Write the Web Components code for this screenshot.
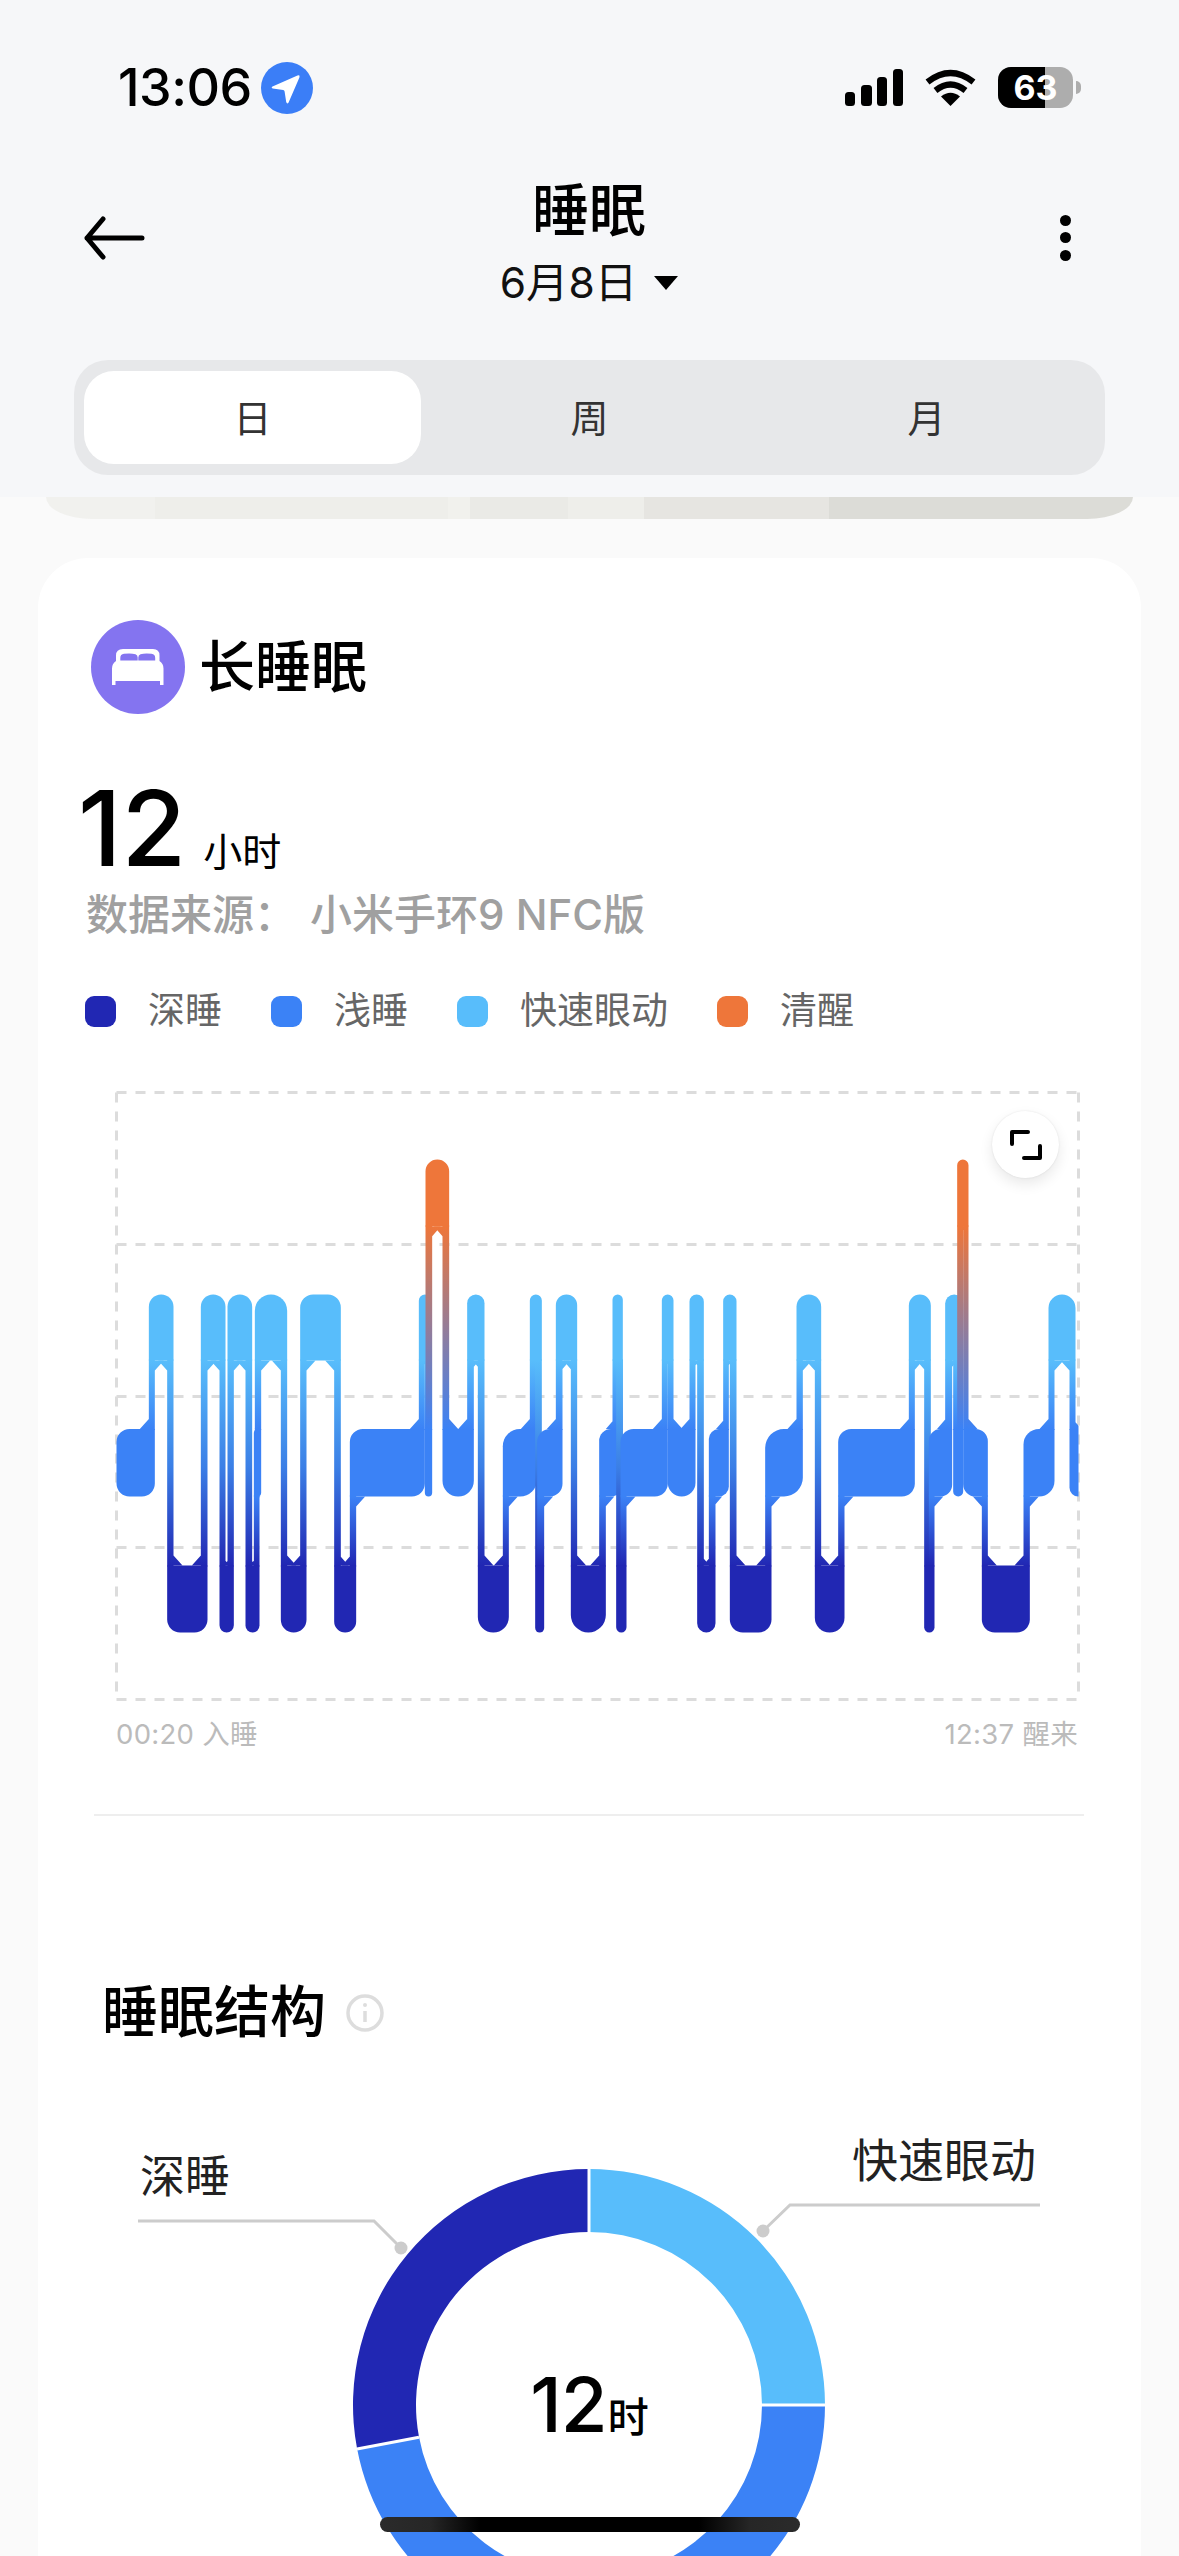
<!DOCTYPE html>
<html lang="zh">
<head>
<meta charset="utf-8">
<title>睡眠</title>
<style>
  html, body { margin: 0; padding: 0; background: #fafafa; }
  body {
    width: 1179px;
    height: 2556px;
    overflow: hidden;
    position: relative;
    font-family: Inter, "Noto Sans CJK SC", sans-serif;
  }
</style>
</head>
<body>
<sleep-header></sleep-header>
<hero-peek></hero-peek>
<sleep-card>
  <card-title>长睡眠</card-title>
  <sleep-summary></sleep-summary>
  <sleep-legend></sleep-legend>
  <sleep-chart></sleep-chart>
  <sleep-structure></sleep-structure>
</sleep-card>
<home-bar></home-bar>

<script>
(function() {
    'use strict';

const FONT = `Inter, "Noto Sans CJK SC", sans-serif`;
const KLEUR = { awake: '#ee763a', rem: '#58bdfb', light: '#3b82f6', deep: '#2127b3' };

class StatusBar extends HTMLElement {
    constructor() {
        super();
        this.attachShadow({ mode: 'open' }).innerHTML = `
      <style>
        :host { display: flex; align-items: center; justify-content: space-between; height: 51px; padding: 62px 98px 0 118px; font-family: ${FONT}; }
        .links { display: flex; align-items: center; gap: 9px; }
        .tijd { font-size: 52px; font-weight: 500; line-height: 51px; color: #000; letter-spacing: -0.5px; }
        .rechts { display: flex; align-items: center; gap: 22px; }
        .batterij { display: flex; align-items: center; gap: 3px; }
        .cel { position: relative; width: 75px; height: 41px; border-radius: 13px; overflow: hidden; background: #adadad; display: flex; align-items: center; justify-content: center; }
        .cel::before { content: ''; position: absolute; left: 0; top: 0; bottom: 0; width: 47px; background: #000; }
        .cel span { position: relative; color: #fff; font-size: 34px; font-weight: 700; line-height: 41px; }
        .nub { width: 5px; height: 13px; background: #adadad; border-radius: 0 6px 6px 0; }
        svg { display: block; }
      </style>
      <div class="links">
        <span class="tijd">13:06</span>
        <svg width="52" height="52" viewBox="0 0 52 52">
          <circle cx="26" cy="26" r="26" fill="#3b7ef7"/>
          <path d="M11.5 24.6 L36.5 13.6 Q39.3 12.6 38.4 15.4 L27.6 40.4 Q26.2 42.6 25.2 40 L23.6 29.4 Q23.4 28.2 22.2 28 L11.7 26.6 Q9.8 25.8 11.5 24.6 Z" fill="#fff"/>
        </svg>
      </div>
      <div class="rechts">
        <svg width="58" height="37" viewBox="0 0 58 37" fill="#000">
          <rect x="0" y="23" width="10" height="14" rx="3.5"/>
          <rect x="16" y="16" width="11" height="21" rx="3.5"/>
          <rect x="32" y="8" width="10" height="29" rx="3.5"/>
          <rect x="48" y="0" width="10" height="37" rx="3.5"/>
        </svg>
        <svg width="51" height="37" viewBox="0 0 51 37">
          <path d="M25.5 37 L16 27.5 Q25.5 20 35 27.5 Z" fill="#000"/>
          <path d="M10.5 21.5 Q25.5 9.5 40.5 21.5" fill="none" stroke="#000" stroke-width="6.2"/>
          <path d="M2.5 13 Q25.5 -5 48.5 13" fill="none" stroke="#000" stroke-width="6.2"/>
        </svg>
        <div class="batterij">
          <div class="cel"><span>63</span></div>
          <div class="nub"></div>
        </div>
      </div>
    `;
    }
}
customElements.define('status-bar', StatusBar);

class NavBar extends HTMLElement {
    constructor() {
        super();
        this.attachShadow({ mode: 'open' }).innerHTML = `
      <style>
        :host { display: grid; grid-template-columns: 1fr auto 1fr; align-items: center; padding: 68px 84px 0 83px; font-family: ${FONT}; color: #000; }
        .midden { display: flex; flex-direction: column; align-items: center; }
        .titel { font-size: 57px; font-weight: 500; line-height: 60px; }
        .datum { display: flex; align-items: center; gap: 17px; font-size: 42.5px; line-height: 54px; margin-top: 15px; color: #111; }
        .datum i { width: 0; height: 0; border-left: 12px solid transparent; border-right: 12px solid transparent; border-top: 14px solid #000; }
        .meer { justify-self: end; margin: 0 24px 16px 0; display: flex; flex-direction: column; gap: 6.5px; }
        .meer b { display: block; width: 11px; height: 11px; border-radius: 50%; background: #000; }
        svg { display: block; margin-bottom: 16px; }
      </style>
      <svg width="62" height="44" viewBox="0 0 62 44" fill="none" stroke="#000" stroke-width="5" stroke-linecap="round" stroke-linejoin="round">
        <path d="M59 22 H4 M20 3 L4 22 L20 41"/>
      </svg>
      <div class="midden">
        <div class="titel">睡眠</div>
        <div class="datum"><span>6月8日</span><i></i></div>
      </div>
      <div class="meer"><b></b><b></b><b></b></div>
    `;
    }
}
customElements.define('nav-bar', NavBar);

class PeriodTabs extends HTMLElement {
    constructor() {
        super();
        this.attachShadow({ mode: 'open' }).innerHTML = `
      <style>
        :host { display: grid; grid-template-columns: repeat(3, 1fr); margin: 0 74px; padding: 11px 10px; height: 93px; background: #e7e8ea; border-radius: 34px; font-family: ${FONT}; }
        .tab { display: flex; align-items: center; justify-content: center; padding-bottom: 5px; font-size: 38px; color: #333; border-radius: 30px; }
        .actief { background: #fff; }
      </style>
      <div class="tab actief">日</div>
      <div class="tab">周</div>
      <div class="tab">月</div>
    `;
    }
}
customElements.define('period-tabs', PeriodTabs);

class SleepHeader extends HTMLElement {
    constructor() {
        super();
        this.attachShadow({ mode: 'open' }).innerHTML = `
      <style>
        :host { display: block; height: 497px; background: #f6f7f9; overflow: hidden; }
        period-tabs { margin-top: 50px; }
      </style>
      <status-bar></status-bar>
      <nav-bar></nav-bar>
      <period-tabs></period-tabs>
    `;
    }
}
customElements.define('sleep-header', SleepHeader);

class HeroPeek extends HTMLElement {
    constructor() {
        super();
        this.attachShadow({ mode: 'open' }).innerHTML = `
      <style>
        :host { display: block; height: 22px; margin: 0 46px; border-radius: 0 0 46px 46px / 0 0 22px 22px;
          background: linear-gradient(90deg, #f1f1ee 0 10%, #eeeeea 10% 37%, #f1f1ed 37% 39%, #eaeae6 39% 48%, #eeeeea 48% 55%, #e6e5e1 55% 72%, #dcdcd7 72% 100%); }
      </style>
    `;
    }
}
customElements.define('hero-peek', HeroPeek);

class SleepCard extends HTMLElement {
    constructor() {
        super();
        this.attachShadow({ mode: 'open' }).innerHTML = `
      <style>
        :host { display: block; margin: 39px 38px 0; padding-top: 62px; height: 1938px; background: #fff; border-radius: 50px 50px 0 0; font-family: ${FONT}; color: #000; overflow: hidden; }
      </style>
      <slot></slot>
    `;
    }
}
customElements.define('sleep-card', SleepCard);

class CardTitle extends HTMLElement {
    constructor() {
        super();
        this.attachShadow({ mode: 'open' }).innerHTML = `
      <style>
        :host { display: flex; align-items: center; gap: 14px; padding-left: 53px; font-family: ${FONT}; }
        .rond { width: 94px; height: 94px; border-radius: 50%; background: #8474f0; display: flex; align-items: center; justify-content: center; }
        .tekst { font-size: 56px; font-weight: 500; line-height: 60px; color: #000; }
        svg { display: block; }
      </style>
      <div class="rond">
        <svg width="52" height="36" viewBox="0 0 52 36">
          <path fill="#fff" d="M11 0 H41 Q47.5 0 47.5 6.5 V12 Q51.5 14.5 51.5 19.5 V36 H48 V32 H3.5 V36 H0 V19.5 Q0 14.5 4 12 V6.5 Q4 0 11 0 Z"/>
          <path fill="#8474f0" d="M8.3 11.5 V9 Q8.3 5.3 12 4.8 Q19 3.8 23.5 5.3 Q25.7 6.2 25.7 8.5 V11.5 Z M26.3 11.5 V8.5 Q26.3 6.2 28.5 5.3 Q33 3.8 39.5 4.8 Q43.2 5.3 43.2 9 V11.5 Z"/>
        </svg>
      </div>
      <span class="tekst"><slot></slot></span>
    `;
    }
}
customElements.define('card-title', CardTitle);

class SleepSummary extends HTMLElement {
    constructor() {
        super();
        this.attachShadow({ mode: 'open' }).innerHTML = `
      <style>
        :host { display: block; padding: 66px 0 0 40px; font-family: ${FONT}; }
        .duur { display: flex; align-items: baseline; gap: 17px; line-height: 96px; height: 96px; }
        .getal { font-size: 105px; font-weight: 500; color: #000; }
        .eenheid { font-size: 39px; color: #000; }
        .bron { display: flex; gap: 14px; margin: 11px 0 0 8px; font-size: 42px; font-weight: 500; line-height: 56px; color: #a0a0a0; white-space: nowrap; }
      </style>
      <div class="duur"><span class="getal">12</span><span class="eenheid">小时</span></div>
      <div class="bron"><span>数据来源：</span><span>小米手环9 NFC版</span></div>
    `;
    }
}
customElements.define('sleep-summary', SleepSummary);

class SleepLegend extends HTMLElement {
    constructor() {
        super();
        const items = [['深睡', KLEUR.deep], ['浅睡', KLEUR.light], ['快速眼动', KLEUR.rem], ['清醒', KLEUR.awake]];
        this.attachShadow({ mode: 'open' }).innerHTML = `
      <style>
        :host { display: flex; gap: 49px; padding: 48px 0 0 47px; font-family: ${FONT}; }
        .item { display: flex; align-items: center; gap: 32px; font-size: 37px; line-height: 40px; color: #666; }
        i { width: 31px; height: 31px; border-radius: 9px; }
      </style>
      ${items.map(([label, kleur]) => `<div class="item"><i style="background:${kleur}"></i><span>${label}</span></div>`).join('')}
    `;
    }
}
customElements.define('sleep-legend', SleepLegend);

// slaapgrafiek: x in kroppen-eenheden, x = 78..2964 -> px = X / 3 (links van de svg)
const SEGMENTEN = [
    ['light', 78, 193], ['rem', 175, 249], ['deep', 230, 351], ['rem', 331, 405], ['deep', 387, 430],
    ['rem', 411, 485], ['deep', 465, 507], ['light', 490, 512], ['rem', 493, 590], ['deep', 571, 648],
    ['rem', 629, 751], ['deep', 731, 797], ['light', 778, 1003], ['rem', 985, 1022], ['light', 1003, 1025],
    ['awake', 1005, 1076], ['light', 1056, 1150], ['rem', 1130, 1182], ['deep', 1162, 1255], ['light', 1237, 1340],
    ['rem', 1318, 1354], ['deep', 1334, 1361], ['light', 1340, 1416], ['rem', 1396, 1460], ['deep', 1441, 1546],
    ['light', 1526, 1597], ['rem', 1566, 1597], ['deep', 1577, 1608], ['light', 1590, 1732], ['rem', 1714, 1749],
    ['light', 1732, 1815], ['rem', 1797, 1840], ['deep', 1820, 1875], ['light', 1855, 1915], ['rem', 1898, 1938],
    ['deep', 1918, 2043], ['light', 2024, 2137], ['rem', 2118, 2192], ['deep', 2173, 2262], ['light', 2243, 2473],
    ['rem', 2455, 2521], ['deep', 2501, 2532], ['light', 2515, 2585], ['rem', 2564, 2618], ['light', 2588, 2618],
    ['awake', 2600, 2634], ['light', 2618, 2692], ['deep', 2674, 2818], ['light', 2799, 2892], ['rem', 2874, 2955],
    ['light', 2937, 2990]
];
// y relatief aan de bovenkant van de grafiek (1092)
const NIVEAU = {
    awake: { top: 67, bottom: 134, rang: 0 },
    rem: { top: 202, bottom: 268, rang: 1 },
    light: { top: 336.5, bottom: 404, rang: 2 },
    deep: { top: 473, bottom: 540, rang: 3 }
};

function blokPad(x0, x1, top, bottom, rTL, rTR, rBR, rBL) {
    const boog = (r, x, y) => r ? `A${r} ${r} 0 0 1 ${x} ${y}` : `L${x} ${y}`;
    return `M${x0 + rTL} ${top} H${x1 - rTR} ${boog(rTR, x1, top + rTR)} V${bottom - rBR} ${boog(rBR, x1 - rBR, bottom)} H${x0 + rBL} ${boog(rBL, x0, bottom - rBL)} V${top + rTL} ${boog(rTL, x0 + rTL, top)} Z`;
}

function bouwGrafiek() {
    const segs = SEGMENTEN.map(([niveau, a, b]) => ({ niveau, x0: a / 3 - 26, x1: b / 3 - 26 }));
    const defs = [];
    let vorm = '';
    const vloeiing = new Map();

    const verloop = (boven, onder) => {
        const id = `v-${boven}-${onder}`;
        if (!vloeiing.has(id)) {
            const stops = [`<stop offset="0" stop-color="${KLEUR[boven]}"/>`];
            if (boven === 'rem' && onder === 'deep') stops.push(`<stop offset="0.52" stop-color="#3b7fe6"/>`);
            stops.push(`<stop offset="1" stop-color="${KLEUR[onder]}"/>`);
            defs.push(`<linearGradient id="${id}" gradientUnits="userSpaceOnUse" x1="0" x2="0" y1="${NIVEAU[boven].bottom}" y2="${NIVEAU[onder].top}">${stops.join('')}</linearGradient>`);
            vloeiing.set(id, true);
        }
        return id;
    };

    segs.forEach((seg, i) => {
        const vorige = segs[i - 1];
        const volgende = segs[i + 1];
        const n = NIVEAU[seg.niveau];
        const w = seg.x1 - seg.x0;
        // smalle blokken krijgen een volle koepel, brede alleen een afgeronde hoek
        const r = w <= 38 ? w / 2 : 13;
        const hoek = (buur, kant) => {
            // hoek is recht als de buur aan die kant zit en in die richting ligt
            if (!buur) return r;
            const buurBoven = NIVEAU[buur.niveau].rang < n.rang;
            return kant === buurBoven ? 0 : r;
        };
        const rTL = hoek(vorige, true);
        const rBL = hoek(vorige, false);
        const rTR = hoek(volgende, true);
        const rBR = hoek(volgende, false);

        // verbinding met het volgende blok
        if (volgende) {
            const cx0 = Math.max(seg.x0, volgende.x0);
            const cx1 = Math.min(seg.x1, volgende.x1);
            const naarBeneden = NIVEAU[volgende.niveau].rang > n.rang;
            const boven = naarBeneden ? seg : volgende;
            const onder = naarBeneden ? volgende : seg;
            const id = verloop(boven.niveau, onder.niveau);
            const yB = NIVEAU[boven.niveau].bottom;
            const yO = NIVEAU[onder.niveau].top;
            let d = `M${cx0} ${yB - 1} H${cx1} V${yO + 1} H${cx0} Z`;
            // kleine schuine overgang naast de verbinding
            const schuin = (blok, y, richting) => {
                const isLinks = Math.abs(blok.x0 - cx0) < 0.5;
                const rand = isLinks ? cx1 : cx0;
                const ruimte = isLinks ? blok.x1 - cx1 : cx0 - blok.x0;
                const andereKant = blok === seg ? vorige : volgende;
                const breed = Math.max(0, Math.min(9, andereKant ? ruimte / 2 : ruimte));
                if (breed <= 0) return '';
                const s = isLinks ? 1 : -1;
                const h = Math.min(10, breed * 1.15);
                return `M${rand} ${y} H${rand + s * breed} L${rand} ${y + richting * h} Z`;
            };
            d += schuin(boven, yB, 1) + schuin(onder, yO, -1);
            vorm += `<path fill="url(#${id})" d="${d}"/>`;
        }
        vorm += `<path fill="${KLEUR[seg.niveau]}" d="${blokPad(seg.x0, seg.x1, n.top, n.bottom, rTL, rTR, rBR, rBL)}"/>`;
    });

    const lijnen = [0, 152, 304, 455, 607].map(y => `<path d="M0 ${y} H962"/>`).join('')
        + `<path d="M0 0 V607"/><path d="M962 0 V607"/>`;

    return `
      <svg width="966" height="612" viewBox="-1.5 -1.5 966 612">
        <defs>
          ${defs.join('')}
          <clipPath id="rand"><rect x="-2" y="-2" width="964" height="620"/></clipPath>
        </defs>
        <g fill="none" stroke="#dcdcdc" stroke-width="3" stroke-dasharray="10 9">${lijnen}</g>
        <g clip-path="url(#rand)">${vorm}</g>
      </svg>`;
}

class SleepChart extends HTMLElement {
    constructor() {
        super();
        this.attachShadow({ mode: 'open' }).innerHTML = `
      <style>
        :host { display: block; position: relative; width: 966px; margin: 60px 0 0 77px; font-family: ${FONT}; }
        svg { display: block; }
        .as { display: flex; justify-content: space-between; width: 962px; margin: 15px 0 0 1px; font-size: 27.5px; line-height: 32px; color: #bbb; }
        .as span { letter-spacing: 0.3px; }
        .groot { position: absolute; left: 877px; top: 20px; width: 67px; height: 67px; border-radius: 50%; background: #fff; box-shadow: 0 6px 14px rgba(0,0,0,0.09), 0 0 2px rgba(0,0,0,0.1); display: flex; align-items: center; justify-content: center; }
      </style>
      ${bouwGrafiek()}
      <div class="as"><span>00:20 入睡</span><span>12:37 醒来</span></div>
      <div class="groot">
        <svg width="32" height="30" viewBox="0 0 32 30" fill="none" stroke="#000" stroke-width="4" stroke-linecap="round" stroke-linejoin="round">
          <path d="M2 14 V2 H18 M30 16 V28 H14"/>
        </svg>
      </div>
    `;
    }
}
customElements.define('sleep-chart', SleepChart);

function boog(cx, cy, R, r, van, tot) {
    const p = (straal, hoek) => {
        const a = (hoek - 90) * Math.PI / 180;
        return `${(cx + straal * Math.cos(a)).toFixed(2)} ${(cy + straal * Math.sin(a)).toFixed(2)}`;
    };
    const groot = tot - van > 180 ? 1 : 0;
    return `M${p(R, van)} A${R} ${R} 0 ${groot} 1 ${p(R, tot)} L${p(r, tot)} A${r} ${r} 0 ${groot} 0 ${p(r, van)} Z`;
}

class SleepStructure extends HTMLElement {
    constructor() {
        super();
        const cx = 551, cy = 266, R = 236, r = 173;
        this.attachShadow({ mode: 'open' }).innerHTML = `
      <style>
        :host { display: block; font-family: ${FONT}; }
        .scheiding { height: 2px; margin: 64px 57px 0 56px; background: #eeeeee; }
        .kop { display: flex; align-items: center; gap: 20px; padding: 166px 0 0 64px; font-size: 56px; font-weight: 500; line-height: 60px; color: #000; }
        .kop svg { display: block; margin-top: 2px; }
        .ring { position: relative; height: 640px; margin-top: 97px; }
        .ring > svg { position: absolute; left: 0; top: 0; display: block; }
        .label { position: absolute; font-size: 45px; line-height: 50px; color: #222; white-space: nowrap; }
        .midden { position: absolute; left: 0; width: 1103px; top: 220px; display: flex; justify-content: center; align-items: baseline; gap: 1px; line-height: 90px; color: #000; }
        .midden b { font-size: 76px; font-weight: 500; letter-spacing: -1px; }
        .midden span { font-size: 41px; font-weight: 500; }
      </style>
      <div class="scheiding"></div>
      <div class="kop">
        <span>睡眠结构</span>
        <svg width="38" height="38" viewBox="0 0 38 38" fill="none" stroke="#dddddd">
          <circle cx="19" cy="19" r="17" stroke-width="3.5"/>
          <path d="M19 17 V28" stroke-width="3.5"/>
          <circle cx="19" cy="11" r="2" fill="#dddddd" stroke="none"/>
        </svg>
      </div>
      <div class="ring">
        <svg width="1103" height="640" viewBox="0 0 1103 640">
          <path fill="${KLEUR.rem}" d="${boog(cx, cy, R, r, 0, 90)}"/>
          <path fill="${KLEUR.light}" d="${boog(cx, cy, R, r, 90, 259.3)}"/>
          <path fill="${KLEUR.deep}" d="${boog(cx, cy, R, r, 259.3, 360)}"/>
          <g stroke="#fff" stroke-width="3">
            <path d="M${cx} ${cy - R - 1} V${cy - r + 1}"/>
            <path d="M${cx + r - 1} ${cy} H${cx + R + 1}"/>
            <path d="M${cx - 232} ${cy + 44} L${cx - 170} ${cy + 32.2}"/>
          </g>
          <g fill="none" stroke="#cccccc" stroke-width="3">
            <path d="M100 82 H336 L363 109"/>
            <path d="M1002 66 H752 L725 92"/>
          </g>
          <circle cx="363" cy="109" r="6.5" fill="#cccccc"/>
          <circle cx="725" cy="92" r="6.5" fill="#cccccc"/>
        </svg>
        <span class="label" style="left:102px;top:13px">深睡</span>
        <span class="label" style="left:814px;top:-4px;font-size:46px">快速眼动</span>
        <div class="midden"><b>12</b><span>时</span></div>
      </div>
    `;
    }
}
customElements.define('sleep-structure', SleepStructure);

class HomeBar extends HTMLElement {
    constructor() {
        super();
        this.attachShadow({ mode: 'open' }).innerHTML = `
      <style>
        :host { position: absolute; left: 380px; top: 2517px; width: 420px; height: 15px; border-radius: 8px;
          background: linear-gradient(90deg, #2b2b2b 0%, #262626 12%, #000 24%, #000 76%, #262626 88%, #2b2b2b 100%); }
      </style>
    `;
    }
}
customElements.define('home-bar', HomeBar);

})();
</script>
</body>
</html>
